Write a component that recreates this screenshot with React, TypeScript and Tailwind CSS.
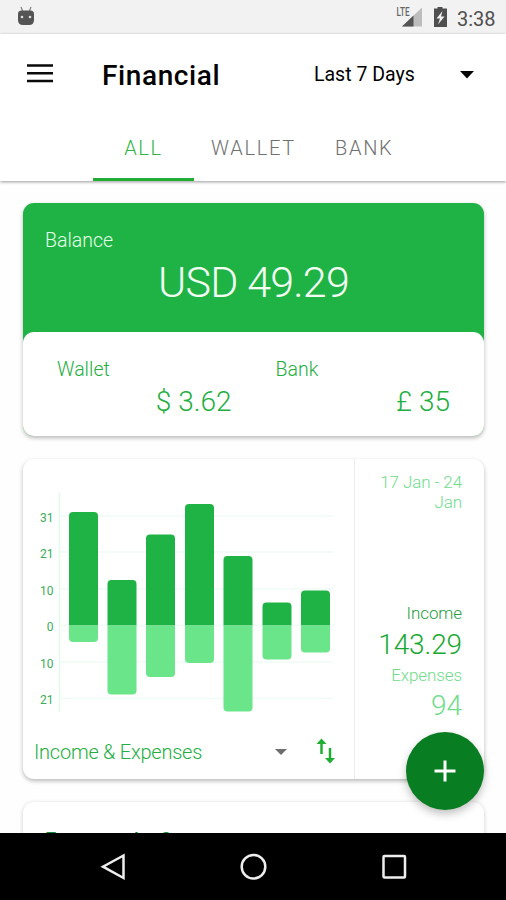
import React from "react";

const DAYS = [
  { x: 69, top: 512, bottom: 642 },
  { x: 107.5, top: 580, bottom: 694.5 },
  { x: 146, top: 534.5, bottom: 677 },
  { x: 185, top: 504, bottom: 663 },
  { x: 223.5, top: 556, bottom: 711.5 },
  { x: 262.5, top: 602.5, bottom: 659.5 },
  { x: 301, top: 590.5, bottom: 652.5 },
];

const TICKS = [
  { label: "31", y: 516 },
  { label: "21", y: 552 },
  { label: "10", y: 589 },
  { label: "0", y: 625.5 },
  { label: "10", y: 662 },
  { label: "21", y: 698.5 },
];

function StatusBar() {
  return (
    <div className="flex h-[34px] shrink-0 items-center bg-[#f2f2f2] pl-[17px] pr-[9px]">
      <svg width="18" height="20" viewBox="0 0 18 20" className="-mt-[2px]">
        <path d="M4 1l1.6 4M14 1l-1.6 4" stroke="#777" strokeWidth="1.1" />
        <path d="M1 8q0-3.5 3.5-3.5h9q3.5 0 3.5 3.5v6q0 5-5 5h-6q-5 0-5-5z" fill="#545454" />
        <circle cx="5" cy="11" r="1.3" fill="#ddd" />
        <circle cx="13" cy="11" r="1.3" fill="#ddd" />
      </svg>
      <div className="grow" />
      <svg width="27" height="22" viewBox="0 0 27 22" className="mr-[10px]">
        <path d="M6 20.5L26 1.500v19z" fill="#bdbdbd" />
        <path d="M6 20.5L17.5 9.500v11z" fill="#545454" />
        <text x="0.5" y="9.5" fontSize="12" fontWeight="500" fill="#666" textLength="13" lengthAdjust="spacingAndGlyphs">LTE</text>
      </svg>
      <svg width="15" height="22" viewBox="0 0 15 22" className="mr-[9px]">
        <path d="M1 2.5H4.5V1h5v1.5H14v18.5h-13z" fill="#4f4f4f" />
        <path d="M9.5 5L3.5 12.5h3.5L5 18.5l6.5-8H8z" fill="#f2f2f2" />
      </svg>
      <span className="mt-[3px] w-[40px] text-[20px] leading-none text-[#4f4f4f]">3:38</span>
    </div>
  );
}

function Header() {
  return (
    <header className="relative z-10 flex h-[147px] shrink-0 flex-col bg-white shadow-[0_1px_3px_rgba(0,0,0,0.4)]">
      <div className="flex h-[80px] items-center pl-[27px] pr-[31px]">
        <svg width="26" height="20" viewBox="0 0 26 20" className="-mt-[2px]">
          <path d="M0 2.5h26M0 10.200h26M0 18h26" stroke="#0a0a0a" strokeWidth="2.5" />
        </svg>
        <h1 className="ml-[49px] mt-[3px] w-[212px] text-[28px] font-medium leading-[32px] tracking-[0.6px] text-black">Financial</h1>
        <span className="mt-[2px] w-[146px] text-[19.5px] leading-[24px] text-black">Last 7 Days</span>
        <svg width="14" height="8" viewBox="0 0 14 8" className="mt-[2px]"><path d="M0 0h14L7 7.5z" fill="#050505" /></svg>
      </div>
      <nav className="flex h-[67px] pl-[93px] text-[20px] font-light leading-[24px]">
        <div className="flex h-[67px] w-[101px] justify-center border-b-[3px] border-[#22ae35] pt-[22px] tracking-[1.7px] text-[#2fb542]">ALL</div>
        <div className="ml-[17px] w-[124px] pt-[22px] tracking-[1.7px] text-[#707070]">WALLET</div>
        <div className="pt-[22px] tracking-[1.7px] text-[#707070]">BANK</div>
      </nav>
    </header>
  );
}

function BalanceCard() {
  return (
    <section className="h-[233px] shrink-0 rounded-[11px] bg-[#1fb345] font-light shadow-[0_2px_4px_rgba(0,0,0,0.28)]">
      <div className="h-[129px] pl-[22px] pt-[26px] text-[#e6ffe8]">
        <div className="text-[19.5px] leading-[24px]">Balance</div>
        <div className="-ml-[22px] mt-[4px] text-center text-[43px] leading-[50px] tracking-[-0.8px] text-[#f4fff4]">USD 49.29</div>
      </div>
      <div className="grid h-[104px] grid-cols-2 rounded-[11px] bg-white text-[#22ae40]">
        <div className="pl-[34px] pr-[22px] pt-[26px]">
          <div className="text-[19.5px] leading-[24px]">Wallet</div>
          <div className="mt-[3px] text-right text-[28px] leading-[34px]">$ 3.62</div>
        </div>
        <div className="pl-[22px] pr-[34px] pt-[26px]">
          <div className="text-[19.5px] leading-[24px]">Bank</div>
          <div className="mt-[3px] text-right text-[28px] leading-[34px]">£ 35</div>
        </div>
      </div>
    </section>
  );
}

function Chart() {
  return (
    <svg width="331" height="266" viewBox="23 459 331 266" className="block">
      <path d="M59.5 492V712" stroke="#e3faeb" strokeWidth="1.5" />
      {TICKS.map((t, i) => (
        <g key={i}>
          <path d={`M60 ${t.y}H333`} stroke="#effbf4" strokeWidth="1.5" />
          <text x="53.5" y={t.y + 5.5} textAnchor="end" fontSize="12" fontWeight="400" fill="#3aac57">{t.label}</text>
        </g>
      ))}
      {DAYS.map((d) => (
        <g key={d.x}>
          <path d={`M${d.x} 625.5V${d.top + 4}q0-4 4-4h21q4 0 4 4V625.5z`} fill="#1fb345" />
          <path d={`M${d.x} 625.5V${d.bottom - 4}q0 4 4 4h21q4 0 4-4V625.5z`} fill="#6be58a" />
        </g>
      ))}
    </svg>
  );
}

function ChartCard() {
  return (
    <section className="mt-[23px] flex h-[320px] shrink-0 rounded-[11px] bg-white font-light shadow-[0_2px_4px_rgba(0,0,0,0.28)]">
      <div className="w-[332px] border-r border-[#ececec]">
        <Chart />
        <div className="flex h-[54px] items-center pl-[11px]">
          <span className="w-[241px] text-[20px] leading-[24px] tracking-[-0.24px] text-[#22ae40]">Income &amp; Expenses</span>
          <svg width="12" height="6" viewBox="0 0 12 6"><path d="M0 0h12L6 6z" fill="#6e6e6e" /></svg>
          <svg width="20" height="26" viewBox="0 0 20 26" className="-mt-[2px] ml-[29px]">
            <path d="M5.5 16V3M14 10v13" stroke="#1fae32" strokeWidth="2.5" fill="none" />
            <path d="M0.5 6L5.5 0.500l5 5.500zM9 20l5 5.500 5-5.500z" fill="#1fae32" />
          </svg>
        </div>
      </div>
      <div className="flex grow flex-col items-end pr-[22px] pt-[13px] text-[#70dc8c]">
        <div className="w-[90px] text-right text-[17px] leading-[20px] tracking-[-0.1px]">17 Jan - 24 Jan</div>
        <div className="mt-[91px] text-[17px] leading-[20px] tracking-[-0.1px] text-[#249e3e]">Income</div>
        <div className="mt-[5px] text-[28px] leading-[34px] tracking-[-0.1px] text-[#18a832]">143.29</div>
        <div className="mt-[3px] text-[17px] leading-[20px] tracking-[-0.1px]">Expenses</div>
        <div className="mt-[4px] text-[28px] leading-[34px]">94</div>
      </div>
    </section>
  );
}

function NavigationBar() {
  return (
    <footer className="relative z-10 flex h-[67px] shrink-0 items-center bg-black pl-[100px]">
      <svg width="308" height="30" viewBox="0 0 308 30" fill="none" stroke="#eee" strokeWidth="2.5">
        <path d="M23.5 3.500v22.500L3 14.700z" />
        <circle cx="153.5" cy="14.7" r="11.8" />
        <rect x="283.5" y="4" width="21.5" height="21.5" rx="1" />
      </svg>
    </footer>
  );
}

export default function App() {
  return (
    <div className="relative flex h-[900px] w-[506px] flex-col overflow-hidden bg-white font-[Roboto,sans-serif]">
      <StatusBar />
      <Header />
      <main className="flex h-[652px] shrink-0 flex-col overflow-hidden bg-[#fefefe] pl-[23px] pr-[22px] pt-[22px]">
        <BalanceCard />
        <ChartCard />
        <section className="mt-[23px] h-[150px] shrink-0 rounded-[11px] bg-white pl-[22px] pt-[26px] shadow-[0_1px_4px_rgba(0,0,0,0.2)]">
          <h2 className="text-[20px] font-medium leading-[24px] tracking-[-0.2px] text-[#148a36]">Expenses by Category</h2>
        </section>
      </main>
      <NavigationBar />
      <button aria-label="Add" className="absolute left-[406px] top-[732px] z-20 flex h-[78px] w-[78px] items-center justify-center rounded-full bg-[#087d21] shadow-[0_4px_8px_rgba(0,0,0,0.25)]">
        <svg width="22" height="22" viewBox="0 0 22 22"><path d="M11 0.500v21M0.500 11h21" stroke="#fff" strokeWidth="3" /></svg>
      </button>
    </div>
  );
}
